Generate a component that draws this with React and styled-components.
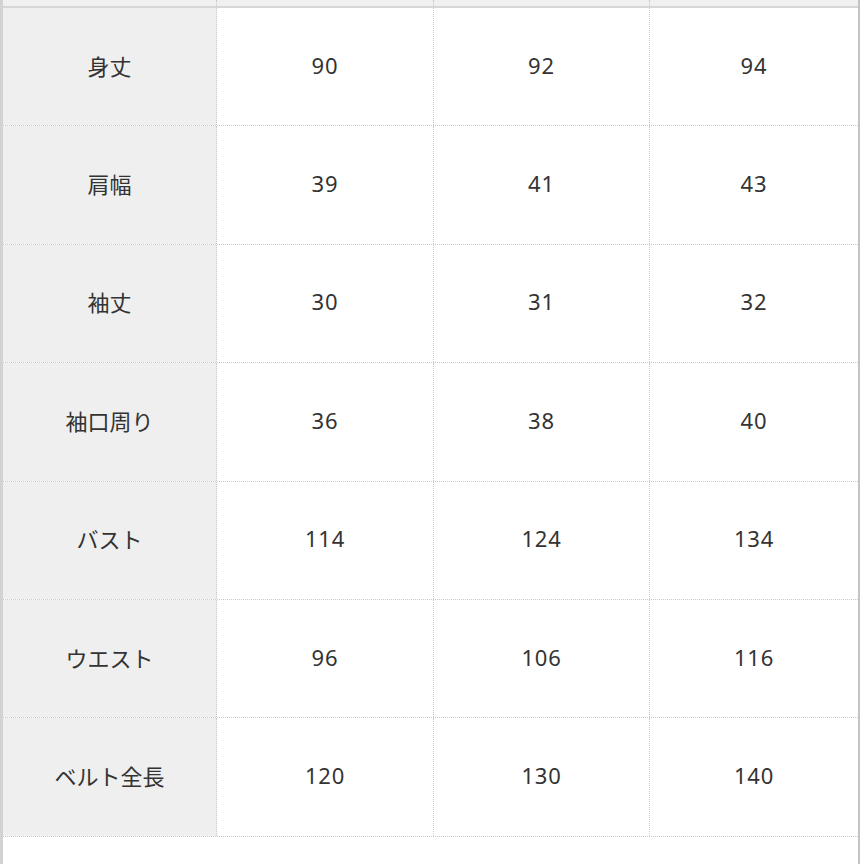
import React from "react";
import styled, { createGlobalStyle } from "styled-components";

const Global = createGlobalStyle`
  html, body { margin: 0; padding: 0; background: #fff; }
  body { font-family: "Noto Sans CJK JP", "Noto Sans", sans-serif; }
`;

const Frame = styled.div`
  width: 864px;
  height: 864px;
  box-sizing: border-box;
  border-left: 3px solid #d2d2d2;
  border-right: 4px solid #fff;
  overflow: hidden;
  background: #fff;
  display: flex;
`;

const Inner = styled.div`
  flex: 1;
  border-right: 2px solid #c4c4c4;
  display: flex;
  flex-direction: column;
`;

const TopStrip = styled.div`
  height: 6px;
  background: #f0f0f0;
  border-bottom: 2px solid #d6d6d6;
  display: grid;
  grid-template-columns: 214px 217px 216px 1fr;
`;

const StripCell = styled.div`
  border-right: ${(p) => (p.$last ? "none" : "1px dotted #c8c8c8")};
`;

const Row = styled.div`
  height: 118.4px;
  box-sizing: border-box;
  border-bottom: 1px dotted #c8c8c8;
  display: grid;
  grid-template-columns: 214px 217px 216px 1fr;
`;

const Cell = styled.div`
  display: flex;
  align-items: center;
  justify-content: center;
  font-size: 22px;
  color: #333;
  background: ${(p) => (p.$label ? "#efefef" : "#fff")};
  border-right: ${(p) => (p.$last ? "none" : "1px dotted #c8c8c8")};
  padding-bottom: 4px;
`;

const Num = styled.span`
  font-family: "Noto Sans", "Liberation Sans", sans-serif;
  letter-spacing: 0.8px;
`;

const rows = [
  ["身丈", "90", "92", "94"],
  ["肩幅", "39", "41", "43"],
  ["袖丈", "30", "31", "32"],
  ["袖口周り", "36", "38", "40"],
  ["バスト", "114", "124", "134"],
  ["ウエスト", "96", "106", "116"],
  ["ベルト全長", "120", "130", "140"],
];

export default function App() {
  return (
    <>
      <Global />
      <Frame>
        <Inner>
          <TopStrip>
            <StripCell />
            <StripCell />
            <StripCell />
            <StripCell $last />
          </TopStrip>
          {rows.map((r) => (
            <Row key={r[0]}>
              <Cell $label>{r[0]}</Cell>
              <Cell><Num>{r[1]}</Num></Cell>
              <Cell><Num>{r[2]}</Num></Cell>
              <Cell $last><Num>{r[3]}</Num></Cell>
            </Row>
          ))}
        </Inner>
      </Frame>
    </>
  );
}
